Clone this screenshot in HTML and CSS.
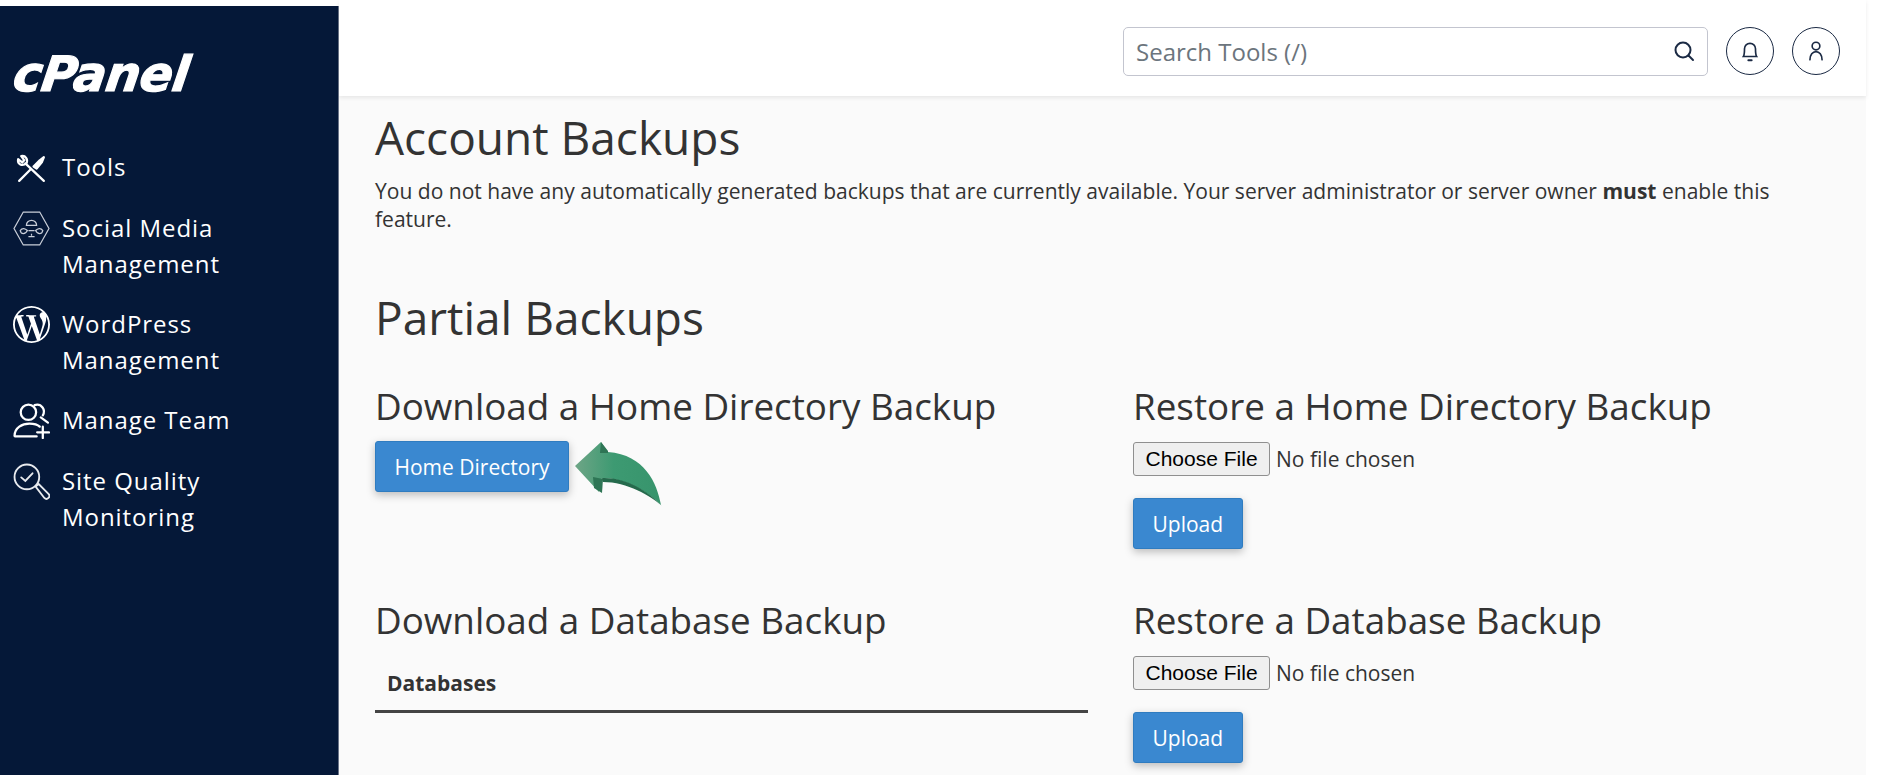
FILE: index.html
```html
<!DOCTYPE html>
<html lang="en">
<head>
  <meta charset="UTF-8">
  <title>Backup - cPanel</title>
  <link rel="stylesheet" href="styles.css">
</head>
<body>
  <div class="app">
    <aside class="sidebar">
      <div class="logo"><span>cPanel</span></div>
      <nav class="nav">
        <a class="nav-item">
          <svg class="nav-icon" viewBox="0 0 36 36" fill="none" stroke="#fff" stroke-width="2.2" stroke-linecap="round" stroke-linejoin="round">
            <path d="M6 31 L17 20"/>
            <path d="M30 31 L12 14"/>
            <path d="M13 14 C15 10 12 6 8 7 L11 11 L9 13 L5 10 C4 15 9 17 13 14 Z"/>
            <path d="M20 17 L26 11 L30 8 L28 13 L23 19 Z" fill="#fff"/>
          </svg>
          <span>Tools</span>
        </a>
        <a class="nav-item">
          <svg class="nav-icon" viewBox="0 0 36 36" fill="none" stroke="#c9ced8" stroke-width="1.2">
            <path d="M10 2 H26 L35 18 L26 34 H10 L1 18 Z"/>
            <path d="M13 15 A5 5 0 0 1 23 15 Z"/>
            <path d="M7 20 C9 17 12 18 14 20 C12 24 8 24 7 20 Z"/>
            <path d="M29 20 C27 17 24 18 22 20 C24 24 28 24 29 20 Z"/>
            <path d="M15 20 H21 M18 23 V25 M15 26 H21"/>
          </svg>
          <span>Social Media<br>Management</span>
        </a>
        <a class="nav-item">
          <svg class="nav-icon" viewBox="0 0 24 24" fill="#fff">
            <path d="M21.469 6.825c.84 1.537 1.318 3.3 1.318 5.175 0 3.979-2.156 7.456-5.363 9.325l3.295-9.527c.615-1.54.82-2.771.82-3.864 0-.405-.026-.78-.07-1.11m-7.981.105c.647-.03 1.232-.105 1.232-.105.582-.075.514-.93-.067-.899 0 0-1.755.135-2.88.135-1.064 0-2.85-.15-2.85-.15-.585-.03-.661.855-.075.885 0 0 .54.061 1.125.09l1.68 4.605-2.37 7.08L5.354 6.9c.649-.03 1.234-.1 1.234-.1.585-.075.516-.93-.065-.896 0 0-1.746.138-2.874.138-.2 0-.438-.008-.69-.015C4.911 3.15 8.235 1.215 12 1.215c2.809 0 5.365 1.072 7.286 2.833-.046-.003-.091-.009-.141-.009-1.06 0-1.812.923-1.812 1.914 0 .89.513 1.643 1.06 2.531.411.72.89 1.643.89 2.977 0 .915-.354 1.994-.821 3.479l-1.075 3.585-3.9-11.61.001.014zM12 22.784c-1.059 0-2.081-.153-3.048-.437l3.237-9.406 3.315 9.087c.024.053.05.101.078.149-1.12.393-2.325.609-3.582.609M1.211 12c0-1.564.336-3.05.935-4.39L7.29 21.709C3.694 19.96 1.212 16.271 1.21 12M12 0C5.385 0 0 5.385 0 12s5.385 12 12 12 12-5.385 12-12S18.615 0 12 0"/>
          </svg>
          <span>WordPress<br>Management</span>
        </a>
        <a class="nav-item">
          <svg class="nav-icon" viewBox="0 0 36 36" fill="none" stroke="#fff" stroke-width="2.2" stroke-linecap="round">
            <circle cx="15" cy="10" r="7.5"/>
            <path d="M21 3 C28 1 32 8 29 13 M27 15 L34 20"/>
            <path d="M1.5 33 C1.5 25 9 21 16 21 C20 21 24 22 26 24"/>
            <path d="M2 33.500 H23 M29 24 V35 M23.500 29.500 H35"/>
          </svg>
          <span>Manage Team</span>
        </a>
        <a class="nav-item">
          <svg class="nav-icon" viewBox="0 0 36 36" fill="none" stroke="#e8eaee" stroke-width="1.8" stroke-linecap="round">
            <circle cx="13.500" cy="13.500" r="12"/>
            <path d="M8 14 L12 17.500 L19 10"/>
            <path d="M22 23 L25 20.500 L34.500 30 A2.500 2.500 0 0 1 30.500 34 Z"/>
          </svg>
          <span>Site Quality<br>Monitoring</span>
        </a>
      </nav>
    </aside>

    <div class="main">
      <header class="topbar">
        <div class="search">
          <span class="search-text">Search Tools (/)</span>
          <svg class="search-icon" viewBox="0 0 22 22" fill="none" stroke="#1b2a44" stroke-width="2" stroke-linecap="round">
            <circle cx="10" cy="10" r="7.500"/>
            <path d="M15.500 15.500 L20 20"/>
          </svg>
        </div>
        <button class="round-btn">
          <svg viewBox="0 0 20 20" fill="none" stroke="#1b2a44" stroke-width="1.500" stroke-linecap="round">
            <path d="M4 15 H16 C15 13.500 15 12 15 8 A5 5 0 0 0 5 8 C5 12 5 13.500 4 15 Z"/>
            <path d="M8.500 18.500 H11.500" stroke-width="1.800"/>
          </svg>
        </button>
        <button class="round-btn">
          <svg viewBox="0 0 20 20" fill="none" stroke="#1b2a44" stroke-width="1.500" stroke-linecap="round">
            <circle cx="10" cy="5.500" r="3.500"/>
            <path d="M4.500 18 C4.500 13.500 7 10.500 10 10.500 C13 10.500 15.500 13.500 15.500 18"/>
          </svg>
        </button>
      </header>

      <main class="content">
        <h1>Account Backups</h1>
        <p class="note">You do not have any automatically generated backups that are currently available. Your server administrator or server owner <b>must</b> enable this feature.</p>

        <h1 class="partial-title">Partial Backups</h1>

        <div class="backup-grid">
          <section class="backup-col">
            <h2>Download a Home Directory Backup</h2>
            <div class="home-row">
              <button class="btn">Home Directory</button>
              <svg class="arrow" viewBox="0 0 90 66">
                <defs>
                  <linearGradient id="arrowFill" x1="0" x2="1" y1="0" y2="0">
                    <stop offset="0" stop-color="#6ea586"/>
                    <stop offset="0.450" stop-color="#3d9a72"/>
                    <stop offset="1" stop-color="#37946c"/>
                  </linearGradient>
                </defs>
                <path d="M26 1 L0 25 L24 51 L27 37 C50 37 72 50 86 64 C82 42 70 14 33 11 Z" fill="url(#arrowFill)"/>
                <path d="M26 1 L33 10 L33 12 L25 12 Z" fill="#2e7555"/>
                <path d="M18 36 L28 38 L27 52 L19 47 Z" fill="#2e7555"/>
                <path d="M27 37 C50 36 72 49 87 65 C76 55 52 41 28 41 Z" fill="#256a4c"/>
              </svg>
            </div>
          </section>
          <section class="backup-col">
            <h2>Restore a Home Directory Backup</h2>
            <div class="file-row"><span class="file-btn">Choose File</span><span class="file-name">No file chosen</span></div>
            <button class="btn">Upload</button>
          </section>
          <section class="backup-col">
            <h2>Download a Database Backup</h2>
            <div class="db-head">Databases</div>
          </section>
          <section class="backup-col">
            <h2>Restore a Database Backup</h2>
            <div class="file-row"><span class="file-btn">Choose File</span><span class="file-name">No file chosen</span></div>
            <button class="btn">Upload</button>
          </section>
        </div>
      </main>
    </div>
  </div>
</body>
</html>
```

FILE: styles.css
```css
html, body {
  margin: 0;
  padding: 0;
  height: 775px;
  overflow: hidden;
  background-color: #fff;
}
body {
  font-family: "Open Sans", sans-serif;
  color: #333;
}
.app {
  display: flex;
  height: 775px;
}
.sidebar {
  width: 338px;
  margin-top: 6px;
  flex-shrink: 0;
  background-color: #051838;
  border-right: 1px solid #6b7488;
  box-sizing: content-box;
}
.logo {
  margin: 38px 0 0 14px;
  height: 70px;
  font-family: "DejaVu Sans", sans-serif;
  font-size: 48.500px;
  line-height: 60px;
  font-weight: bold;
  font-style: italic;
  color: #fff;
  -webkit-text-stroke: 1.2px #fff;
  letter-spacing: -0.5px;
}
.logo span {
  display: inline-block;
  transform: skewX(-8deg);
}
.nav {
  margin-top: 35px;
  padding-left: 13px;
}
.nav-item {
  display: flex;
  gap: 12px;
  margin-bottom: 24px;
  color: #fff;
  font-size: 24px;
  line-height: 36px;
  letter-spacing: 0.950px;
}
.nav-icon {
  width: 37px;
  height: 37px;
  flex-shrink: 0;
}
.main {
  flex: 1;
  display: flex;
  flex-direction: column;
  width: 1527px;
  margin-right: 31px;
  background-color: #fafafa;
}
.topbar {
  height: 96px;
  flex-shrink: 0;
  display: flex;
  align-items: center;
  justify-content: flex-end;
  gap: 18px;
  padding-right: 26px;
  background-color: #fff;
  box-shadow: 0 2px 4px rgba(0,0,0,0.08);
}
.search {
  width: 559px;
  height: 47px;
  margin-top: 6px;
  padding: 0 12px;
  display: flex;
  align-items: center;
  justify-content: space-between;
  border: 1px solid #c3c5cf;
  border-radius: 5px;
}
.search-text {
  font-size: 24px;
  color: #6c757d;
}
.search-icon {
  width: 22px;
  height: 22px;
}
.round-btn {
  width: 48px;
  height: 48px;
  margin-top: 6px;
  padding: 12px;
  border: 1px solid #1b2a44;
  border-radius: 50%;
  background-color: #fff;
}
.round-btn svg {
  display: block;
  width: 22px;
  height: 22px;
}
.content {
  padding: 12px 30px 0 36px;
}
h1 {
  margin: 0;
  font-size: 46px;
  line-height: 58px;
  font-weight: 400;
}
.note {
  margin: 11px 0 0;
  font-size: 21.040px;
  line-height: 28px;
}
.partial-title {
  margin-top: 55px;
}
.backup-grid {
  display: grid;
  grid-template-columns: 758px 1fr;
  row-gap: 36px;
  margin-top: 35px;
}
.backup-col {
  min-height: 178px;
}
.backup-col:nth-child(3) {
  width: 713px;
}
h2 {
  margin: 0 0 10px;
  font-size: 36.800px;
  line-height: 50px;
  font-weight: 400;
}
.home-row {
  display: flex;
  gap: 6px;
}
.btn {
  display: block;
  height: 51px;
  padding: 0 18.500px;
  border: 1px solid #2f7cc0;
  border-radius: 3px;
  background-color: #3a88d0;
  color: #fff;
  font-family: "Open Sans", sans-serif;
  font-size: 21px;
  box-shadow: 0 3px 8px rgba(0,0,0,0.25);
}
.arrow {
  width: 90px;
  height: 66px;
}
.file-row {
  display: flex;
  align-items: center;
  gap: 6px;
  margin: 11px 0 22px;
}
.file-btn {
  display: block;
  padding: 0 11.500px;
  height: 32px;
  line-height: 32px;
  border: 1px solid #8f8f8f;
  border-radius: 3px;
  background-color: #efefef;
  color: #000;
  font-family: "Liberation Sans", sans-serif;
  font-size: 21px;
}
.file-name {
  font-size: 21px;
}
.db-head {
  padding: 11px 12px 10px;
  border-bottom: 3px solid #444;
  font-size: 21px;
  line-height: 34px;
  font-weight: bold;
}
```
